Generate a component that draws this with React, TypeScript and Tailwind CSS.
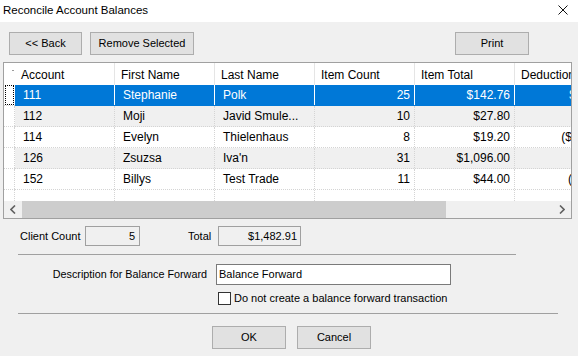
import React from "react";

type Row = {
  account: string;
  first: string;
  last: string;
  count: string;
  total: string;
  deduction: string;
};

const rows: Row[] = [
  { account: "111", first: "Stephanie", last: "Polk", count: "25", total: "$142.76", deduction: "$14.28" },
  { account: "112", first: "Moji", last: "Javid Smule...", count: "10", total: "$27.80", deduction: "$0.00" },
  { account: "114", first: "Evelyn", last: "Thielenhaus", count: "8", total: "$19.20", deduction: "($19.20)" },
  { account: "126", first: "Zsuzsa", last: "Iva'n", count: "31", total: "$1,096.00", deduction: "$0.00" },
  { account: "152", first: "Billys", last: "Test Trade", count: "11", total: "$44.00", deduction: "($4.40)" },
];

const headers = ["Account", "First Name", "Last Name", "Item Count", "Item Total", "Deduction"];

function WinButton({ label, className = "" }: { label: string; className?: string }) {
  return (
    <button
      className={`flex h-[23px] items-center justify-center border border-[#adadad] bg-[#e1e1e1] text-[11px] text-black ${className}`}
    >
      {label}
    </button>
  );
}

function Cell({
  text,
  right,
  selected,
  last,
}: {
  text: string;
  right?: boolean;
  selected?: boolean;
  last?: boolean;
}) {
  return (
    <div
      className={`flex h-full shrink-0 items-center whitespace-nowrap ${
        last ? "w-[95px] justify-end pr-[4px]" : "w-[100px] border-r"
      } ${right ? "justify-end pr-[4px]" : "pl-[8px]"} ${
        selected ? "border-solid border-white text-white" : "border-dotted border-[#d4d4d4] text-black"
      }`}
    >
      {text}
    </div>
  );
}

export default function App() {
  return (
    <div className="flex h-[356px] w-[578px] flex-col overflow-hidden bg-[#f0f0f0] font-['Liberation_Sans',Arial,sans-serif] text-[11px] text-black">
      {/* title bar */}
      <div className="flex h-[22px] shrink-0 items-center justify-between bg-white pl-[3px] pr-[10px]">
        <span className="text-[11.5px] leading-none">Reconcile Account Balances</span>
        <svg width="10" height="10" viewBox="0 0 10 10" className="mb-[2px]">
          <path d="M0.5 0.5 L9.5 9.5 M9.5 0.5 L0.5 9.5" stroke="#111" strokeWidth="1" />
        </svg>
      </div>

      {/* toolbar */}
      <div className="flex h-[40px] shrink-0 items-center pl-[9px] pt-[3px]">
        <WinButton label="<< Back" className="w-[73px]" />
        <WinButton label="Remove Selected" className="ml-[8px] w-[104px]" />
        <WinButton label="Print" className="ml-[261px] w-[74px]" />
      </div>

      {/* grid */}
      <div className="ml-[3px] flex h-[157px] w-[569px] shrink-0 flex-col border border-[#a0a0a0] bg-white">
        <div className="flex h-[138px] flex-col overflow-hidden text-[12px]">
          {/* header */}
          <div className="flex h-[22px] shrink-0 bg-white">
            <div className="relative w-[11px] shrink-0">
              <span className="absolute left-[8px] top-[7px] h-[1px] w-[2px] bg-[#9a9a9a]" />
            </div>
            {headers.map((h, i) => (
              <div
                key={h}
                className={`flex h-full w-[100px] shrink-0 items-center whitespace-nowrap pl-[6px] pt-[1px] ${
                  i < headers.length - 1 ? "border-r border-[#e5e5e5]" : ""
                }`}
              >
                {h}
              </div>
            ))}
          </div>
          {rows.map((r, i) => {
            const sel = i === 0;
            const bg = sel ? "bg-[#0078d7]" : i % 2 === 1 ? "bg-[#f0f0f0]" : "bg-white";
            return (
              <div key={r.account} className={`flex h-[21px] shrink-0 ${bg}`}>
                <div className="flex h-full w-[11px] shrink-0 items-stretch border-b border-dotted border-[#d4d4d4] bg-white">
                  {sel ? (
                    <div className="ml-[1px] w-[9px] border border-dotted border-black" />
                  ) : (
                    <div className="w-full border-r border-dotted border-[#d4d4d4]" />
                  )}
                </div>
                <div
                  className={`flex h-full border-b border-dotted ${
                    sel ? "border-[#0078d7]" : "border-[#d4d4d4]"
                  }`}
                >
                  <Cell text={r.account} selected={sel} />
                  <Cell text={r.first} selected={sel} />
                  <Cell text={r.last} selected={sel} />
                  <Cell text={r.count} right selected={sel} />
                  <Cell text={r.total} right selected={sel} />
                  <Cell text={r.deduction} right selected={sel} last />
                </div>
              </div>
            );
          })}
          <div className="flex flex-1">
            <div className="w-[11px] shrink-0 border-r border-dotted border-[#d4d4d4]" />
            {[0, 1, 2, 3, 4].map((k) => (
              <div key={k} className="w-[100px] shrink-0 border-r border-dotted border-[#d4d4d4]" />
            ))}
          </div>
        </div>
        {/* horizontal scrollbar */}
        <div className="flex h-[17px] shrink-0 items-stretch bg-[#f0f0f0]">
          <div className="flex w-[18px] shrink-0 items-center justify-center">
            <svg width="6" height="9" viewBox="0 0 6 9">
              <path d="M5 0.5 L1 4.5 L5 8.5" fill="none" stroke="#606060" strokeWidth="1.6" />
            </svg>
          </div>
          <div className="w-[424px] bg-[#cdcdcd]" />
          <div className="flex-1" />
          <div className="flex w-[18px] shrink-0 items-center justify-center">
            <svg width="6" height="9" viewBox="0 0 6 9">
              <path d="M1 0.5 L5 4.5 L1 8.5" fill="none" stroke="#606060" strokeWidth="1.6" />
            </svg>
          </div>
        </div>
      </div>

      {/* totals */}
      <div className="mt-[7px] flex h-[20px] shrink-0 items-center">
        <span className="ml-[20px] w-[65px]">Client Count</span>
        <div className="flex h-[20px] w-[55px] items-center justify-end border border-[#a0a0a0] bg-[#f0f0f0] pr-[4px]">
          5
        </div>
        <span className="ml-[48px] w-[30px]">Total</span>
        <div className="flex h-[20px] w-[83px] items-center justify-end border border-[#a0a0a0] bg-[#f0f0f0] pr-[3px]">
          $1,482.91
        </div>
      </div>

      <div className="ml-[18px] mt-[8px] h-[1px] w-[498px] shrink-0 bg-[#a0a0a0]" />

      {/* description */}
      <div className="mt-[9px] flex h-[21px] shrink-0 items-center">
        <span className="w-[207px] text-right text-[10.8px]">Description for Balance Forward</span>
        <div className="ml-[9px] flex h-[21px] w-[235px] items-center border border-[#7a7a7a] bg-white pl-[2px]">
          Balance Forward
        </div>
      </div>

      <label className="ml-[218px] mt-[6px] flex h-[14px] shrink-0 items-center">
        <span className="h-[13px] w-[13px] border border-[#333] bg-white" />
        <span className="ml-[3px]">Do not create a balance forward transaction</span>
      </label>

      <div className="ml-[18px] mt-[8px] h-[1px] w-[540px] shrink-0 bg-[#a0a0a0]" />

      {/* footer buttons */}
      <div className="mt-[12px] flex shrink-0">
        <WinButton label="OK" className="ml-[212px] w-[74px]" />
        <WinButton label="Cancel" className="ml-[11px] w-[74px]" />
      </div>
    </div>
  );
}
